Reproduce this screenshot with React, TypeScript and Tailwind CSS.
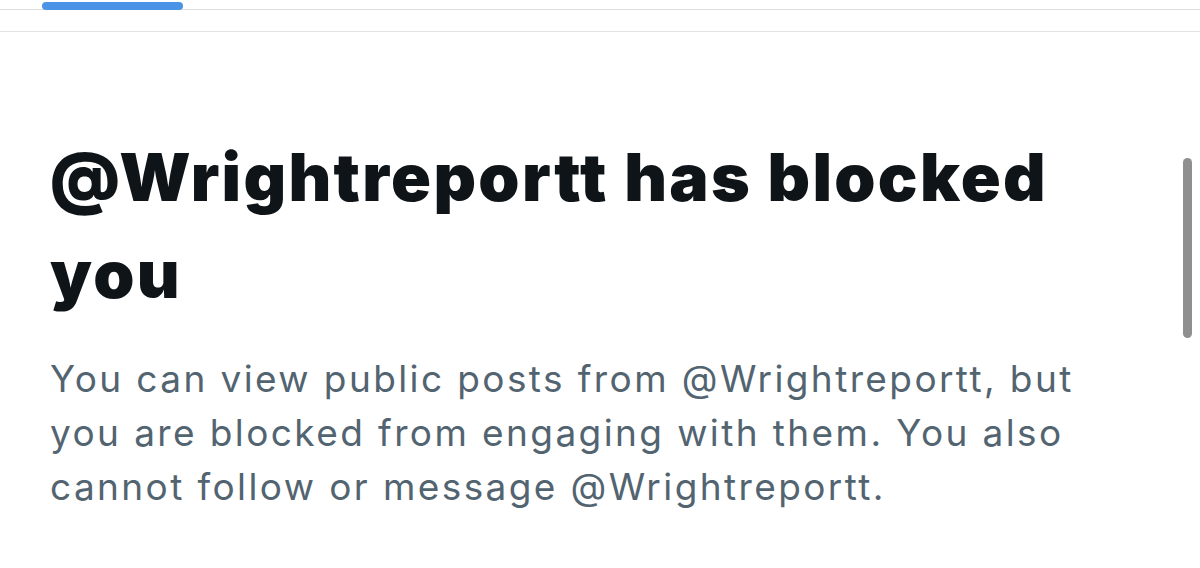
import React from 'react';

const App: React.FC = () => {
  return (
    <div className="relative w-[1200px] h-[568px] overflow-hidden bg-white font-['Inter',sans-serif]">
      {/* Tab strip */}
      <div className="h-[10px] border-b border-[#dcdcdc] flex items-start">
        <div className="ml-[42px] mt-[2px] w-[141px] h-[8px] rounded-full bg-[#4a93e6]" />
      </div>
      <div className="h-[22px] border-b border-[#e3e3e3]" />

      {/* Blocked notice */}
      <div className="pl-[50px] pt-[97px] w-[1130px]">
        <h1 className="text-[66px] leading-[97px] font-black text-[#0f1419] tracking-[2.3px]">
          @Wrightreportt has blocked you
        </h1>
        <p className="mt-[29px] text-[37px] leading-[54px] text-[#536471] tracking-[2.4px]">
          You can view public posts from @Wrightreportt, but you are blocked from engaging with them. You also
          cannot follow or message @Wrightreportt.
        </p>
      </div>

      {/* Scrollbar */}
      <div className="absolute left-[1183px] top-[158px] w-[9px] h-[180px] rounded-full bg-[#8f8f8f]" />
    </div>
  );
};

export default App;
